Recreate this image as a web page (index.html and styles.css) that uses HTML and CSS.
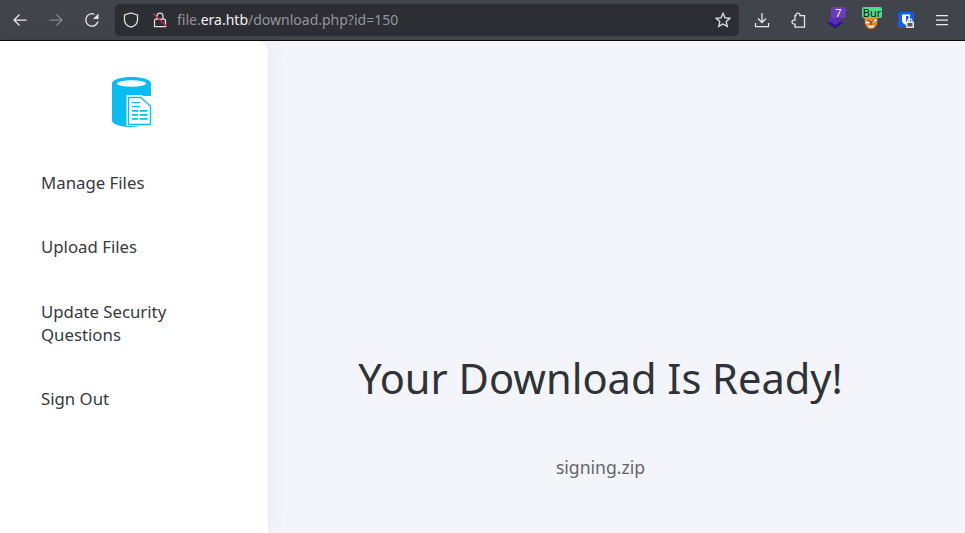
FILE: index.html
```html
<!DOCTYPE html>
<html lang="en">
<head>
<meta charset="utf-8">
<title>Download</title>
<link rel="stylesheet" href="styles.css">
</head>
<body>
<header class="toolbar">
  <div class="nav-group">
    <svg class="ico" viewBox="0 0 16 16"><path d="M14.500 8H2M7.500 2.500 2 8l5.500 5.500" class="st"/></svg>
    <svg class="ico dim" viewBox="0 0 16 16"><path d="M1.500 8H14M8.500 2.500 14 8l-5.500 5.500" class="st"/></svg>
    <svg class="ico" viewBox="0 0 16 16"><path d="M14 9.500A6.200 6.200 0 1 1 10.500 2.300" class="st"/><path d="M14.500 1.500v5.500H9z" class="fl"/></svg>
  </div>
  <div class="urlbar">
    <svg class="ico-s" viewBox="0 0 16 16"><path d="M8 1 14.500 3v5c0 3.500-3 6-6.500 7.200C4.500 14 1.500 11.500 1.500 8V3z" class="st"/></svg>
    <svg class="ico-s lock" viewBox="0 0 16 16"><path d="M5 7V4a3 3 0 0 1 6 0v3M2.500 8.500c0-1 .5-1.500 1.500-1.500h8c1 0 1.500.5 1.500 1.500v6h-11z" class="st"/><path d="M1 1.500 15 14.500" class="slash"/></svg>
    <span class="url"><span class="url-dim">file.</span>era.htb<span class="url-dim">/download.php?id=150</span></span>
    <svg class="ico-s star" viewBox="0 0 16 16"><path d="m8 1.300 2 4.500 4.900.5-3.700 3.200 1.100 4.900L8 12l-4.300 2.400 1.100-4.900L1.100 6.300 6 5.800z" class="st"/></svg>
  </div>
  <div class="tools">
    <svg class="ico" viewBox="0 0 16 16"><path d="M8 1v9.500M4 6.500l4 4 4-4M1.500 11v3.500h13V11" class="st"/></svg>
    <svg class="ico" viewBox="0 0 16 16"><path d="M6 3.500V3a2 2 0 0 1 4 0v.5h4.500v11.500H5v-3H4a2 2 0 0 1 0-4h1V3.500z" class="st"/></svg>
    <div class="ext">
      <svg class="ext-art" viewBox="0 0 20 20"><path d="M10 9l8 4-8 5.500-8-5.500z" fill="#2d1a80"/><path d="M10 5l8 5-8 5-8-5z" fill="#5b2bb5"/></svg>
      <span class="badge badge-purple">7</span>
    </div>
    <div class="ext">
      <svg class="ext-art" viewBox="0 0 20 20"><path d="M3.500 8h13l-.5 6c-1 3-3.500 5-6 5s-5-2-6-5z" fill="#e98a24"/><path d="M4.500 12.500h4M11.500 11.500l4-1.500M7 16.500h6" stroke="#fff" stroke-width="1.500"/><path d="M7 10l3 2.500 3-2.500M10 13v2" stroke="#5a2c0c" stroke-width="1" fill="none"/></svg>
      <span class="badge badge-green">Bur</span>
    </div>
    <div class="ext">
      <svg class="bw-art" viewBox="0 0 16 16"><rect x="0" y="0" width="16" height="16" rx="2" fill="#175ddc"/><path d="M4 2.500h8v6c0 2-2 3.500-4 4.500-2-1-4-2.500-4-4.500z" fill="#fff"/><path d="M8 4h2.500v4.500c0 1-1.500 2-2.500 2.700z" fill="#175ddc"/><path d="M9.500 10V9a2.200 2.200 0 0 1 4.400 0v1" stroke="#e8e8e8" fill="none" stroke-width="1.200"/><rect x="8" y="9.500" width="8" height="6.500" rx="1" fill="#e8e8e8"/><rect x="9.500" y="11" width="5" height="3.500" fill="#55565c"/></svg>
    </div>
    <svg class="ico" viewBox="0 0 16 16"><path d="M2 3.500h12M2 8h12M2 12.500h12" class="st"/></svg>
  </div>
</header>
<div class="page">
  <aside class="sidebar">
    <svg class="logo" viewBox="0 0 42 50">
      <path d="M0 6.500C0 2.500 9 0 19.500 0S39 2.500 39 6.500V19H26v30.500c-2 .3-4.500.5-6.500.5C9 50 0 47.500 0 43.500z" fill="#0bbcf0"/>
      <ellipse cx="19.500" cy="6.500" rx="14.500" ry="3.200" fill="#fff"/>
      <path d="M14.500 18H30l11 10v21H14.500z" fill="#fff"/>
      <path d="M16.500 20.500h12.500l9.500 8.700v18.300H16.500z" fill="#fff" stroke="#0bbcf0" stroke-width="1.300"/>
      <path d="M20 25h8v1.200h-8zM20 29h8v1.200h-8zM20 33h6v1.800h-6zM27.500 33h8v1.800h-8zM20 37h6v1.800h-6zM27.500 37h8v1.800h-8zM20 41h6v1.800h-6zM27.500 41h8v1.800h-8z" fill="#0bbcf0"/>
    </svg>
    <nav class="menu">
      <a class="item">Manage Files</a>
      <a class="item">Upload Files</a>
      <a class="item">Update Security Questions</a>
      <a class="item">Sign Out</a>
    </nav>
  </aside>
  <main class="content">
    <h1 class="title">Your Download Is Ready!</h1>
    <p class="file">signing.zip</p>
  </main>
</div>
</body>
</html>
```
FILE: styles.css
```css
* { box-sizing: border-box; }
html, body { margin: 0; height: 100%; overflow: hidden; }
body { background: #f4f5fa; font-family: "Noto Sans", sans-serif; display: flex; flex-direction: column; }
.toolbar { height: 41px; flex: none; background: #42444c; border-bottom: 1px solid #0c0c0d; display: flex; align-items: center; padding: 0 0 0 12px; }
.st { fill: none; stroke: currentColor; stroke-width: 1.250; }
.fl { fill: currentColor; }
.slash { fill: none; stroke: #e2214a; stroke-width: 1.300; }
.ico { width: 16px; height: 16px; color: #e9e9ec; flex: none; }
.ico-s { width: 16px; height: 16px; color: #e4e4e8; flex: none; }
.dim { opacity: .4; }
.nav-group { display: flex; gap: 20px; align-items: center; width: 103px; }
.urlbar { width: 624px; height: 32px; background: #2c2e34; border-radius: 5px; display: flex; align-items: center; padding: 0 8px; margin-top: -1px; }
.lock { margin-left: 13px; }
.url { margin-left: 9px; font-size: 14px; color: #f4f4f6; flex: 1; white-space: nowrap; }
.url-dim { color: #94959a; }
.tools { display: flex; align-items: center; margin-left: 15px; gap: 20px; }
.ext { position: relative; width: 16px; height: 16px; flex: none; }
.ext-art { width: 20px; height: 20px; position: absolute; left: -1px; top: -2px; }
.bw-art { width: 16px; height: 16px; display: block; }
.badge { position: absolute; top: -5px; font-size: 11px; line-height: 11px; border-radius: 2px; height: 11px; text-align: center; }
.badge-purple { left: 5px; width: 15px; background: #6b3bc0; color: #fff; }
.badge-green { left: 0; width: 20px; background: #4ddc8c; color: #111; }
.page { flex: 1; display: flex; min-height: 0; }
.sidebar { width: 268px; flex: none; background: #fff; border-top-right-radius: 12px; box-shadow: 0 0 20px rgba(0,0,0,.06); display: flex; flex-direction: column; align-items: center; padding-top: 36px; }
.logo { width: 42px; height: 50px; flex: none; margin-left: -3px; }
.menu { align-self: stretch; padding: 0 41px; margin-top: 44px; display: flex; flex-direction: column; gap: 41px; }
.item { font-size: 16.8px; line-height: 23.3px; color: #36393e; }
.content { flex: 1; display: flex; flex-direction: column; align-items: center; padding: 309px 32px 0 0; }
.title { margin: 0; font-size: 41.6px; line-height: 57px; font-weight: 400; color: #2f3237; }
.file { margin: 49px 0 0; font-size: 17.6px; line-height: 23px; color: #63666b; }
```
